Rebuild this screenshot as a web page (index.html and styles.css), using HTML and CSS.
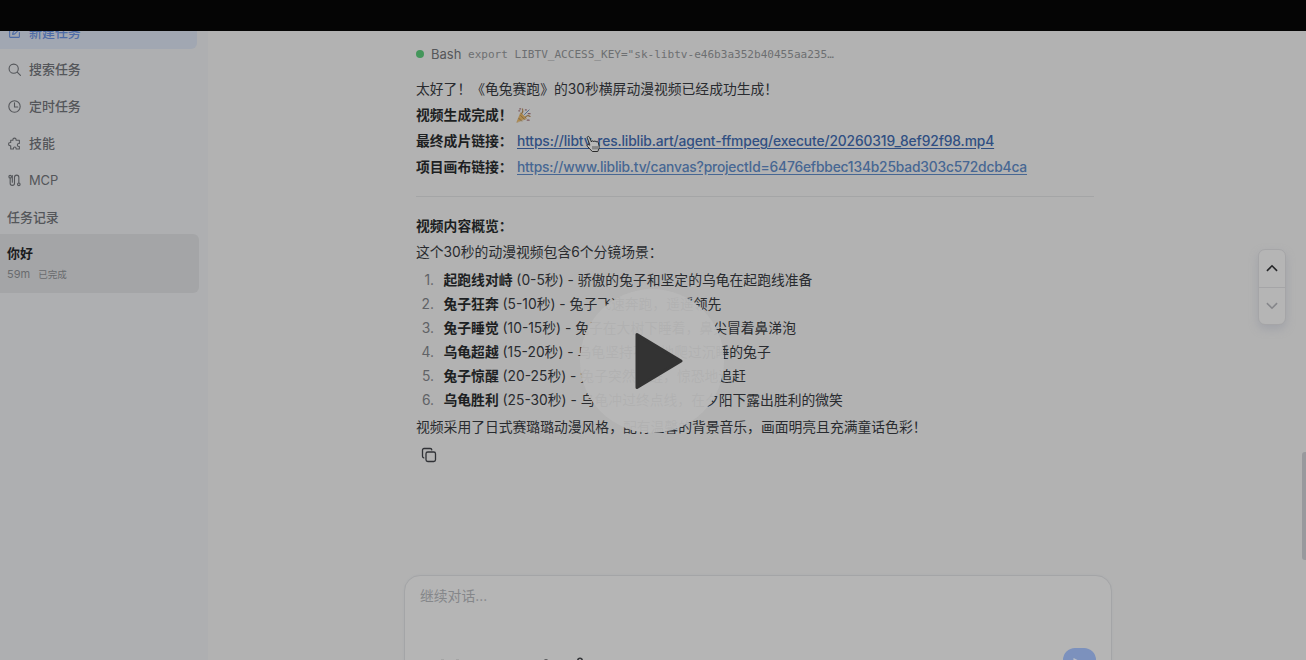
FILE: index.html
```html
<!DOCTYPE html>
<html lang="zh-CN">
<head>
<meta charset="utf-8">
<title>你好</title>
<link rel="stylesheet" href="styles.css">
</head>
<body>
<div class="letterbox"></div>
<div class="app">
  <aside class="sidebar">
    <nav class="nav">
      <a class="nav-item primary"><svg class="icon" viewBox="0 0 24 24"><path d="M12 3H4a1 1 0 0 0-1 1v16a1 1 0 0 0 1 1h16a1 1 0 0 0 1-1v-8"/><path d="M18.4 2.6a2.1 2.1 0 0 1 3 3L12.5 14.500l-4 1 1-4z"/></svg>新建任务</a>
      <a class="nav-item"><svg class="icon" viewBox="0 0 24 24"><circle cx="10.500" cy="10.500" r="8.500"/><path d="m17 17 6 6"/></svg>搜索任务</a>
      <a class="nav-item"><svg class="icon" viewBox="0 0 24 24"><circle cx="12" cy="12" r="10.500"/><path d="M12 5v8h6"/></svg>定时任务</a>
      <a class="nav-item"><svg class="icon" viewBox="0 0 24 24"><path d="M9 6V5a3 3 0 0 1 6 0v1h6v6h-1a2.800 2.800 0 0 0 0 5.600h1V22h-6v-1a2.500 2.500 0 0 0-5 0v1H5v-6H4a3 3 0 0 1 0-6h1V6z"/></svg>技能</a>
      <a class="nav-item"><svg class="icon" viewBox="0 0 24 24"><circle cx="4" cy="5" r="2.400"/><circle cx="20" cy="19" r="2.400"/><path d="M4 8v9a4 4 0 0 0 8 0V6a4 4 0 0 1 8 0v10M8 3v12"/></svg><span class="mcp">MCP</span></a>
    </nav>
    <div class="history-title">任务记录</div>
    <div class="task">
      <div class="task-name">你好</div>
      <div class="task-meta"><span class="age">59m</span><span>已完成</span></div>
    </div>
  </aside>
  <main class="main">
    <article class="message">
      <div class="tool"><i class="dot"></i><span class="tool-name">Bash</span><code>export LIBTV_ACCESS_KEY="sk-libtv-e46b3a352b40455aa235…</code></div>
      <p>太好了！《龟兔赛跑》的30秒横屏动漫视频已经成功生成！</p>
      <p class="strong party">视频生成完成！<svg class="emoji" viewBox="0 0 16 16"><path d="M1 15 5 5l6 6z" fill="#b18b4d" stroke="#a37f47" stroke-width=".6"/><path d="m3 11 3 3M5 8l4 4" stroke="#7b6543"/><path d="M6 6q2-2 1-5M10 10q2-3 5-1" stroke="#86683f" stroke-width="1.200"/><path d="m9 7 5-5" stroke="#4f6b8c"/><path d="M3 3h1M10 2h1M13 6h2M12 13h2M4 1h1" stroke="#7c5960" stroke-width="1.300"/></svg></p>
      <p class="link-row"><b>最终成片链接：</b><a class="link hover">https://libtv-res.liblib.art/agent-ffmpeg/execute/20260319_8ef92f98.mp4</a></p>
      <p class="link-row"><b>项目画布链接：</b><a class="link canvas-link">https://www.liblib.tv/canvas?projectId=6476efbbec134b25bad303c572dcb4ca</a></p>
      <hr>
      <p class="strong">视频内容概览：</p>
      <p>这个30秒的动漫视频包含6个分镜场景：</p>
      <ol class="scenes">
        <li><span class="num">1.</span><b>起跑线对峙</b> (0-5秒) - 骄傲的兔子和坚定的乌龟在起跑线准备</li>
        <li><span class="num">2.</span><b>兔子狂奔</b> (5-10秒) - 兔子飞速奔跑，遥遥领先</li>
        <li><span class="num">3.</span><b>兔子睡觉</b> (10-15秒) - 兔子在大树下睡着，鼻尖冒着鼻涕泡</li>
        <li><span class="num">4.</span><b>乌龟超越</b> (15-20秒) - 乌龟坚持不懈地爬过沉睡的兔子</li>
        <li><span class="num">5.</span><b>兔子惊醒</b> (20-25秒) - 兔子突然惊醒，惊恐地追赶</li>
        <li><span class="num">6.</span><b>乌龟胜利</b> (25-30秒) - 乌龟冲过终点线，在夕阳下露出胜利的微笑</li>
      </ol>
      <p>视频采用了日式赛璐璐动漫风格，配有温馨的背景音乐，画面明亮且充满童话色彩！</p>
      <svg class="copy" viewBox="0 0 16 16"><rect x="5" y="5" width="9.500" height="9.500" rx="1.800"/><path d="M2.800 10.800A1.500 1.500 0 0 1 1.500 9.300V3A1.500 1.500 0 0 1 3 1.500h6.300a1.500 1.500 0 0 1 1.500 1.300"/></svg>
    </article>
    <section class="composer">
      <div class="placeholder">继续对话...</div>
      <div class="tools">
        <i class="speck"></i><i class="speck second"></i>
        <svg class="bits" viewBox="0 0 50 10"><path d="M2 5q3-4 6 0" /><circle cx="39" cy="3.500" r="2.200"/><path d="M39 6v4M43 5h3"/></svg>
        <span class="send"><svg viewBox="0 0 24 24"><path d="m3 3 18 9-18 9 3-9z"/></svg></span>
      </div>
    </section>
  </main>
</div>
<div class="jump"><span><svg viewBox="0 0 12 12"><path d="m1.500 8.300 4.500-4.500 4.500 4.500"/></svg></span><span class="off"><svg viewBox="0 0 12 12"><path d="m1.500 3.700 4.500 4.500 4.500-4.500"/></svg></span></div>
<div class="scrollbar"></div>
<svg class="cursor" viewBox="0 0 16 18"><path d="M4.500 9 2.300 3.200C1.600 1.500 3.800 .700 4.500 2.300L6.500 7c0-1.500 2-1.500 2.300-.2.300-1.200 2-1 2.300.3.500-1 2-.6 2.200.6l.8 3.300c.4 2-.5 3.500-1.300 5.500H7.300L2.500 11.500C1.200 10 3 8.700 4.500 10z"/><path d="M8 11.500v2.500M10 11.500v2.500M12 11.500v2.500" stroke-width=".7"/></svg>
<div class="play"><svg viewBox="0 0 48 58"><path d="M2 2.500v53l44-26.500z"/></svg></div>
</body>
</html>
```
FILE: styles.css
```css
* { box-sizing: border-box; }
body {
  margin: 0;
  width: 1306px;
  height: 660px;
  overflow: hidden;
  position: relative;
  background: #b2b2b2;
  color: #292b2f;
  font: 13.8px/26px Inter, "Noto Sans CJK SC", sans-serif;
}
svg { fill: none; stroke: currentColor; stroke-linecap: round; stroke-linejoin: round; display: block; flex: none; }
b, .strong { font-weight: 600; color: #1d1f22; }
.letterbox { height: 31px; background: #050505; }
.app { display: flex; height: 629px; }

.sidebar { width: 208px; background: #aeafb1; overflow: hidden; font-size: 12.95px; color: #54565a; }
.nav { display: flex; flex-direction: column; gap: 5px; margin-top: -14px; }
.nav-item { height: 32px; display: flex; align-items: center; gap: 8px; padding: 0 0 2px 8px; font-weight: 500; }
.nav-item.primary { width: 197px; background: #a1a7b2; color: #4e6ca6; border-radius: 0 0 6px 0; }
.icon { width: 13px; height: 13px; stroke-width: 2; }
.mcp { letter-spacing: -.1px; font-weight: 400; }
.history-title { height: 32px; line-height: 30px; margin-top: 5px; padding-left: 7px; font-weight: 500; }
.task { width: 199px; height: 59px; padding: 9px 7px; background: #a4a5a7; border-radius: 0 6px 6px 0; }
.task-name { font-weight: 600; line-height: 20px; color: #1b1c1e; }
.task-meta { display: flex; gap: 8px; font-size: 9.5px; line-height: 23px; color: #696b6e; }
.age { font-size: 11px; }

.main { flex: 1; display: flex; flex-direction: column; padding-left: 196px; overflow: hidden; }
.message { height: 544px; flex: none; width: 690px; padding: 10px 0 0 12px; }
.tool { height: 26px; display: flex; align-items: center; margin-bottom: 9px; color: #55575a; }
.dot { width: 8px; height: 8px; border-radius: 50%; background: #44965b; margin-right: 7px; }
.tool-name { width: 37px; font-size: 13px; }
code { font: 11.06px "DejaVu Sans Mono", monospace; color: #6d6f71; white-space: nowrap; }
p { margin: 0; height: 26px; white-space: nowrap; }
.party { display: flex; align-items: center; }
.emoji { width: 15px; height: 15px; margin-left: 3px; }
.link-row { display: flex; }
.link-row b { width: 101px; }
.link { color: #476793; text-decoration: underline; text-underline-offset: 2px; font-weight: 500; letter-spacing: -.18px; }
.link.hover { color: #304f82; letter-spacing: -.12px; }
hr { height: 1px; width: 678px; border: 0; margin: 16px 0; background: #a4a5a6; }
.scenes { margin: 3px 0 2px; padding: 0; list-style: none; }
.scenes li { height: 24px; line-height: 24px; white-space: nowrap; }
.num { display: inline-block; width: 18px; margin-right: 9.5px; text-align: right; color: #606266; }
.copy { width: 16px; height: 16px; margin: 7px 0 0 5px; color: #303236; stroke-width: 1.3; }

.composer { width: 708px; height: 140px; border: 1px solid #a4a5a7; border-radius: 16px; background: #b5b5b5; padding: 7px 15px; box-shadow: 0 0 2px #a9abae; flex: none; }
.placeholder { color: #85878a; }
.tools { display: flex; margin-top: 39px; height: 34px; align-items: flex-start; }
.speck { width: 3px; height: 1px; margin: 11px 12px 0 21px; background: #a5a5a5; }
.speck.second { margin: 11px 0 0; }
.bits { width: 50px; height: 10px; margin: 9px 0 0 82px; color: #35373a; stroke-width: 1.6; }
.send { width: 33px; height: 33px; margin-left: auto; border-radius: 12px; background: #7c91bd; display: flex; align-items: flex-start; padding: 9px; color: #b9bec8; }
.send svg { width: 15px; height: 15px; stroke-width: 2; }

.jump { position: absolute; left: 1258px; top: 249px; width: 28px; height: 76px; border: 1px solid #a5a5a7; border-radius: 7px; background: #b5b5b5; box-shadow: 0 4px 10px #a0a2a8; display: flex; flex-direction: column; }
.jump span { flex: 1; display: flex; align-items: center; justify-content: center; color: #252628; }
.jump .off { border-top: 1px solid #a5a5a7; color: #85868a; }
.jump svg { width: 12px; height: 12px; stroke-width: 1.6; stroke-linecap: square; stroke-linejoin: miter; }
.scrollbar { position: absolute; right: 0; top: 452px; width: 4px; height: 108px; border-radius: 3px 0 0 3px; background: #98999d; }
.cursor { position: absolute; left: 585px; top: 135px; width: 16px; height: 18px; fill: #b8b8b8; stroke: #2b2b2b; stroke-width: 1; }
.play { position: absolute; left: 580px; top: 289px; width: 144px; height: 144px; border-radius: 50%; background: rgba(184, 184, 184, .95); color: #333; }
.play svg { width: 48px; height: 58px; margin: 43px 0 0 55px; fill: #333; stroke-width: 3; }
```
